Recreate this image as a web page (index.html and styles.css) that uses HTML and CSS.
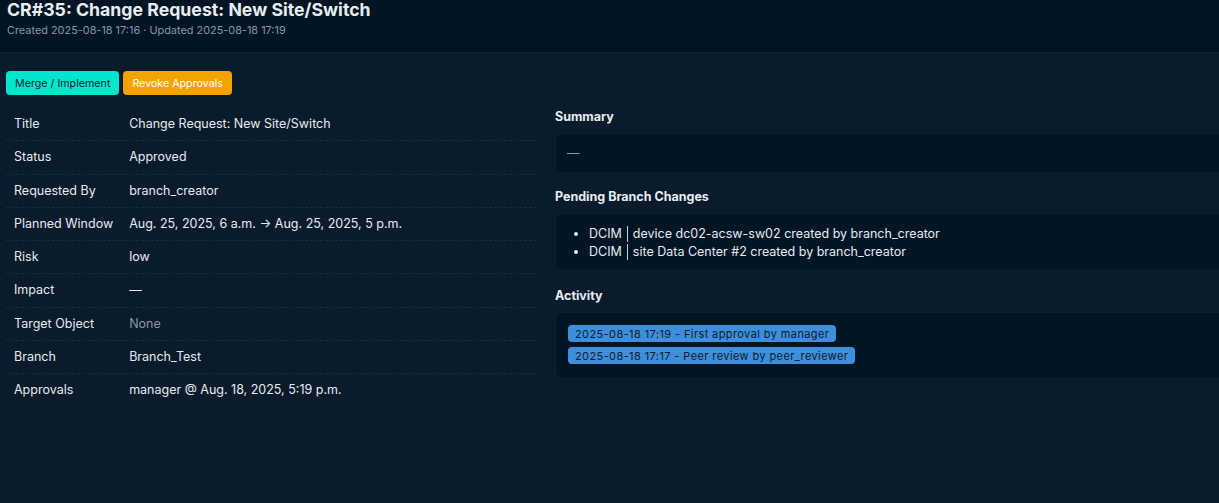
FILE: index.html
```html
<!DOCTYPE html>
<html lang="en">
<head>
<meta charset="utf-8">
<title>CR#35: Change Request: New Site/Switch</title>
<link rel="stylesheet" href="styles.css">
</head>
<body>
<header class="page-header">
  <h1 class="page-title">CR#35: Change Request: New Site/Switch</h1>
  <div class="page-meta">Created 2025-08-18 17:16 · Updated 2025-08-18 17:19</div>
</header>
<main class="content">
  <div class="actions">
    <button class="btn btn-merge">Merge / Implement</button>
    <button class="btn btn-revoke">Revoke Approvals</button>
  </div>
  <div class="columns">
    <table class="details">
      <tbody>
        <tr><th>Title</th><td>Change Request: New Site/Switch</td></tr>
        <tr><th>Status</th><td>Approved</td></tr>
        <tr><th>Requested By</th><td>branch_creator</td></tr>
        <tr><th>Planned Window</th><td>Aug. 25, 2025, 6 a.m. → Aug. 25, 2025, 5 p.m.</td></tr>
        <tr><th>Risk</th><td>low</td></tr>
        <tr><th>Impact</th><td>—</td></tr>
        <tr><th>Target Object</th><td class="muted">None</td></tr>
        <tr><th>Branch</th><td>Branch_Test</td></tr>
        <tr class="last"><th>Approvals</th><td>manager @ Aug. 18, 2025, 5:19 p.m.</td></tr>
      </tbody>
    </table>
    <section class="side">
      <h2 class="side-heading">Summary</h2>
      <div class="box box-summary"><span class="muted">—</span></div>
      <h2 class="side-heading">Pending Branch Changes</h2>
      <div class="box box-list">
        <ul class="changes">
          <li><span class="app">DCIM</span><span class="sep"></span>device dc02-acsw-sw02 created by branch_creator</li>
          <li><span class="app">DCIM</span><span class="sep"></span>site Data Center #2 created by branch_creator</li>
        </ul>
      </div>
      <h2 class="side-heading">Activity</h2>
      <div class="box box-activity">
        <div class="chip">2025-08-18 17:19 - First approval by manager</div>
        <div class="chip">2025-08-18 17:17 - Peer review by peer_reviewer</div>
      </div>
    </section>
  </div>
</main>
</body>
</html>
```
FILE: styles.css
```css
html, body {
  margin: 0;
  padding: 0;
  overflow-x: hidden;
}
body {
  background: #0a1b2b;
  color: #e4ebf2;
  font-family: "Inter", "Noto Sans", sans-serif;
  font-size: 12.5px;
  min-height: 503px;
}
.page-header {
  background: #001423;
  border-bottom: 1px solid #0f2438;
  padding: 0 7px;
  height: 53px;
  box-sizing: border-box;
}
.page-title {
  margin: 0;
  font-size: 17.7px;
  font-weight: 700;
  line-height: 20px;
  color: #e8edf2;
}
.page-meta {
  margin-top: 3px;
  font-size: 10.9px;
  line-height: 15px;
  color: #8796a5;
}
.content {
  padding: 18px 6px 0;
}
.actions {
  display: flex;
  gap: 4px;
}
.btn {
  font-family: inherit;
  font-size: 10.7px;
  line-height: 13px;
  border: none;
  border-radius: 4px;
  padding: 5px 9px;
  height: 24px;
  cursor: pointer;
}
.btn-merge {
  background: #00e6cc;
  color: #0b2030;
}
.btn-revoke {
  background: #f5a300;
  color: #ffffff;
}
.columns {
  display: grid;
  grid-template-columns: 531px 700px;
  gap: 18px;
  margin-top: 13px;
}
.details {
  border-collapse: collapse;
  width: 100%;
}
.details th, .details td {
  text-align: left;
  font-weight: 400;
  padding: 8px 8px;
  line-height: 16.25px;
  border-bottom: 1px dashed #1a2c3d;
  vertical-align: middle;
  white-space: nowrap;
}
.details th {
  width: 99px;
  color: #e4ebf2;
}
.details tr.last th, .details tr.last td {
  border-bottom: none;
}
.muted {
  color: #8c98a4;
}
.side {
  padding-top: 0;
}
.side-heading {
  margin: 0 0 8px;
  font-size: 12.5px;
  font-weight: 700;
  line-height: 17px;
  color: #e8edf2;
}
.box {
  background: #011525;
  border: 1px solid #0d1f30;
  border-radius: 6px;
  margin-bottom: 15px;
  box-sizing: border-box;
}
.box-summary {
  padding: 11px 11px;
  line-height: 16px;
  height: 40px;
}
.box-list {
  padding: 11px 11px 10px;
  height: 58px;
  margin-bottom: 16px;
}
.changes {
  margin: 0;
  padding-left: 22px;
  line-height: 18px;
}
.changes li {
  margin: 0;
}
.sep {
  display: inline-block;
  width: 1px;
  height: 16px;
  background: #c8d2dc;
  margin: 0 5px;
  vertical-align: -4px;
}
.box-activity {
  padding: 12px 12px 14px;
  display: flex;
  flex-direction: column;
  align-items: flex-start;
  gap: 5px;
}
.chip {
  background: #3d8fdc;
  color: #0d1d2c;
  font-size: 11px;
  line-height: 16px;
  letter-spacing: 0.4px;
  padding: 1px 7px 0;
  border-radius: 4px;
}
```
